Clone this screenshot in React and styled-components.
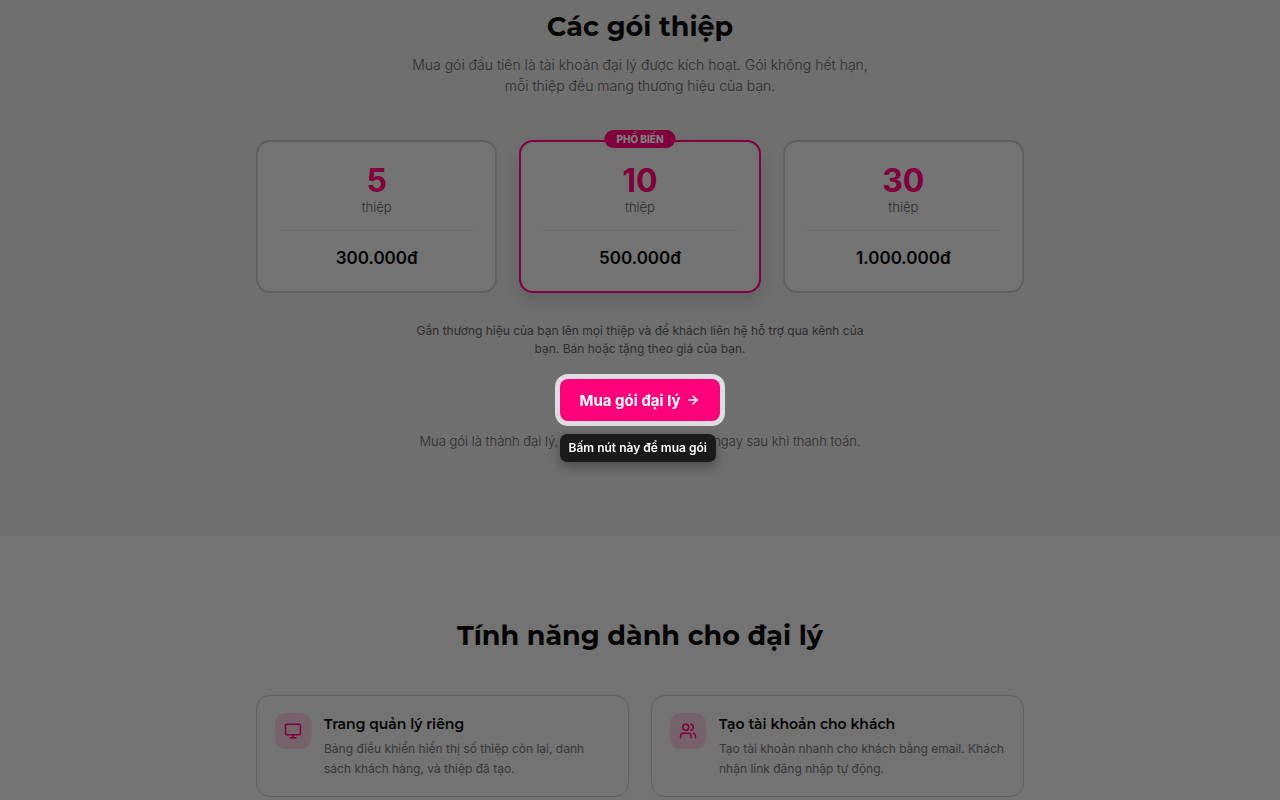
import styled, { createGlobalStyle, css } from 'styled-components';
import { ArrowRight, Monitor, Users } from 'lucide-react';

const colors = {
  pink: '#ff007a',
  pinkLight: '#ecc4d6',
  black: '#0a0a0a',
  gray: '#707070',
  grayDark: '#5c5c5c',
  border: '#c0c0c0',
  divider: '#d6d6d6',
  white: '#ffffff',
  page: '#e6e6e6',
  muted: '#dedede',
};

const headingFont = "'Montserrat', 'Inter', sans-serif";

const GlobalStyle = createGlobalStyle`
  *, *::before, *::after {
    box-sizing: border-box;
  }
  body {
    margin: 0;
    background: ${colors.page};
    color: ${colors.black};
    font-family: 'Inter', sans-serif;
    font-size: 14px;
  }
  h2, h3, p, ul {
    margin: 0;
    padding: 0;
  }
`;

const Container = styled.div`
  width: 100%;
  max-width: 768px;
  margin: 0 auto;
`;

const PricingSection = styled.section`
  padding: 8px 16px 86px;
  background: ${colors.muted};
  text-align: center;
`;

const FeatureSection = styled.section`
  padding: 81px 16px 0;
`;

const SectionTitle = styled.h2`
  font-family: ${headingFont};
  font-size: 27px;
  font-weight: 700;
  line-height: 38px;
  text-align: center;
`;

const Lead = styled.p`
  max-width: 460px;
  margin: 8px auto 0;
  color: ${colors.grayDark};
  font-size: 14px;
  font-weight: 300;
  line-height: 21px;
`;

const PlanList = styled.ul`
  display: grid;
  grid-template-columns: repeat(3, 1fr);
  gap: 22px;
  margin-top: 44px;
  list-style: none;
`;

const PlanCard = styled.li`
  position: relative;
  padding: 22px 22px 20px;
  border: 2px solid ${colors.border};
  border-radius: 14px;
  background: ${colors.page};

  ${({ $popular }) =>
    $popular &&
    css`
      border-color: ${colors.pink};
      box-shadow: 0 8px 16px rgba(0, 0, 0, 0.12);
    `}
`;

const PopularBadge = styled.span`
  position: absolute;
  top: -12px;
  left: 50%;
  transform: translateX(-50%);
  padding: 0 12px;
  border-radius: 9px;
  background: ${colors.pink};
  color: ${colors.white};
  font-size: 10px;
  font-weight: 800;
  line-height: 18px;
  white-space: nowrap;
`;

const PlanCount = styled.div`
  color: ${colors.pink};
  font-size: 32px;
  font-weight: 700;
  line-height: 34px;
`;

const PlanUnit = styled.div`
  color: ${colors.grayDark};
  font-size: 13px;
  font-weight: 300;
  line-height: 18px;
`;

const PlanPrice = styled.div`
  margin-top: 14px;
  padding-top: 14px;
  border-top: 1px solid ${colors.divider};
  font-size: 17px;
  font-weight: 600;
  line-height: 26px;
`;

const Note = styled.p`
  max-width: 460px;
  margin: 29px auto 0;
  color: ${colors.grayDark};
  font-size: 12px;
  line-height: 18px;
`;

const BuyWrapper = styled.div`
  position: relative;
  z-index: 20;
  width: fit-content;
  margin: 21px auto 0;
`;

const BuyButton = styled.button`
  display: flex;
  align-items: center;
  justify-content: center;
  gap: 6px;
  height: 42px;
  padding: 0 20px;
  border: 0;
  border-radius: 8px;
  background: ${colors.pink};
  box-shadow: 0 0 0 5px #dedede;
  color: ${colors.white};
  font-family: inherit;
  font-size: 15px;
  font-weight: 700;
  cursor: pointer;
`;

const Tooltip = styled.div`
  position: absolute;
  top: 55px;
  left: 0;
  padding: 0 9px;
  border-radius: 7px;
  background: #1a1a1a;
  box-shadow: 0 4px 12px rgba(0, 0, 0, 0.35);
  color: ${colors.white};
  font-size: 12px;
  font-weight: 600;
  line-height: 28px;
  white-space: nowrap;
`;

const SmallNote = styled.p`
  margin-top: 11px;
  color: ${colors.grayDark};
  font-size: 13px;
  font-weight: 300;
  line-height: 18px;
`;

const FeatureGrid = styled.div`
  display: grid;
  grid-template-columns: repeat(2, 1fr);
  gap: 22px;
  margin-top: 40px;
`;

const FeatureCard = styled.article`
  display: flex;
  gap: 13px;
  padding: 17px 18px;
  border: 1px solid ${colors.border};
  border-radius: 14px;
`;

const FeatureIcon = styled.div`
  display: flex;
  align-items: center;
  justify-content: center;
  flex-shrink: 0;
  width: 36px;
  height: 36px;
  border-radius: 10px;
  background: ${colors.pinkLight};
  color: ${colors.pink};
`;

const FeatureTitle = styled.h3`
  font-family: ${headingFont};
  font-size: 14px;
  font-weight: 600;
  line-height: 22px;
`;

const FeatureText = styled.p`
  margin-top: 4px;
  color: ${colors.gray};
  font-size: 12px;
  line-height: 20px;
`;

const Backdrop = styled.div`
  position: fixed;
  inset: 0;
  z-index: 10;
  background: rgba(0, 0, 0, 0.5);
`;

const plans = [
  { count: 5, price: '300.000đ' },
  { count: 10, price: '500.000đ', popular: true },
  { count: 30, price: '1.000.000đ' },
];

const features = [
  {
    icon: Monitor,
    title: 'Trang quản lý riêng',
    text: 'Bảng điều khiển hiển thị số thiệp còn lại, danh sách khách hàng, và thiệp đã tạo.',
  },
  {
    icon: Users,
    title: 'Tạo tài khoản cho khách',
    text: 'Tạo tài khoản nhanh cho khách bằng email. Khách nhận link đăng nhập tự động.',
  },
];

const Plan = ({ count, price, popular }) => (
  <PlanCard $popular={popular}>
    {popular ? <PopularBadge>PHỔ BIẾN</PopularBadge> : null}
    <PlanCount>{count}</PlanCount>
    <PlanUnit>thiệp</PlanUnit>
    <PlanPrice>{price}</PlanPrice>
  </PlanCard>
);

const Feature = ({ icon: Icon, title, text }) => (
  <FeatureCard>
    <FeatureIcon>
      <Icon size={18} aria-hidden='true' />
    </FeatureIcon>
    <div>
      <FeatureTitle>{title}</FeatureTitle>
      <FeatureText>{text}</FeatureText>
    </div>
  </FeatureCard>
);

const App = () => (
  <>
    <GlobalStyle />
    <main>
      <PricingSection>
        <Container>
          <SectionTitle>Các gói thiệp</SectionTitle>
          <Lead>
            Mua gói đầu tiên là tài khoản đại lý được kích hoạt. Gói không hết hạn, mỗi thiệp đều
            mang thương hiệu của bạn.
          </Lead>
          <PlanList>
            {plans.map((plan) => (
              <Plan key={plan.count} {...plan} />
            ))}
          </PlanList>
          <Note>
            Gắn thương hiệu của bạn lên mọi thiệp và để khách liên hệ hỗ trợ qua kênh của bạn. Bán
            hoặc tặng theo giá của bạn.
          </Note>
          <BuyWrapper>
            <BuyButton type='button' aria-describedby='buy-hint'>
              Mua gói đại lý
              <ArrowRight size={14} strokeWidth={2.5} aria-hidden='true' />
            </BuyButton>
            <Tooltip id='buy-hint' role='tooltip'>
              Bấm nút này để mua gói
            </Tooltip>
          </BuyWrapper>
          <SmallNote>Mua gói là thành đại lý, tài khoản được kích hoạt ngay sau khi thanh toán.</SmallNote>
        </Container>
      </PricingSection>
      <FeatureSection>
        <Container>
          <SectionTitle>Tính năng dành cho đại lý</SectionTitle>
          <FeatureGrid>
            {features.map((feature) => (
              <Feature key={feature.title} {...feature} />
            ))}
          </FeatureGrid>
        </Container>
      </FeatureSection>
    </main>
    <Backdrop />
  </>
);

export default App;
